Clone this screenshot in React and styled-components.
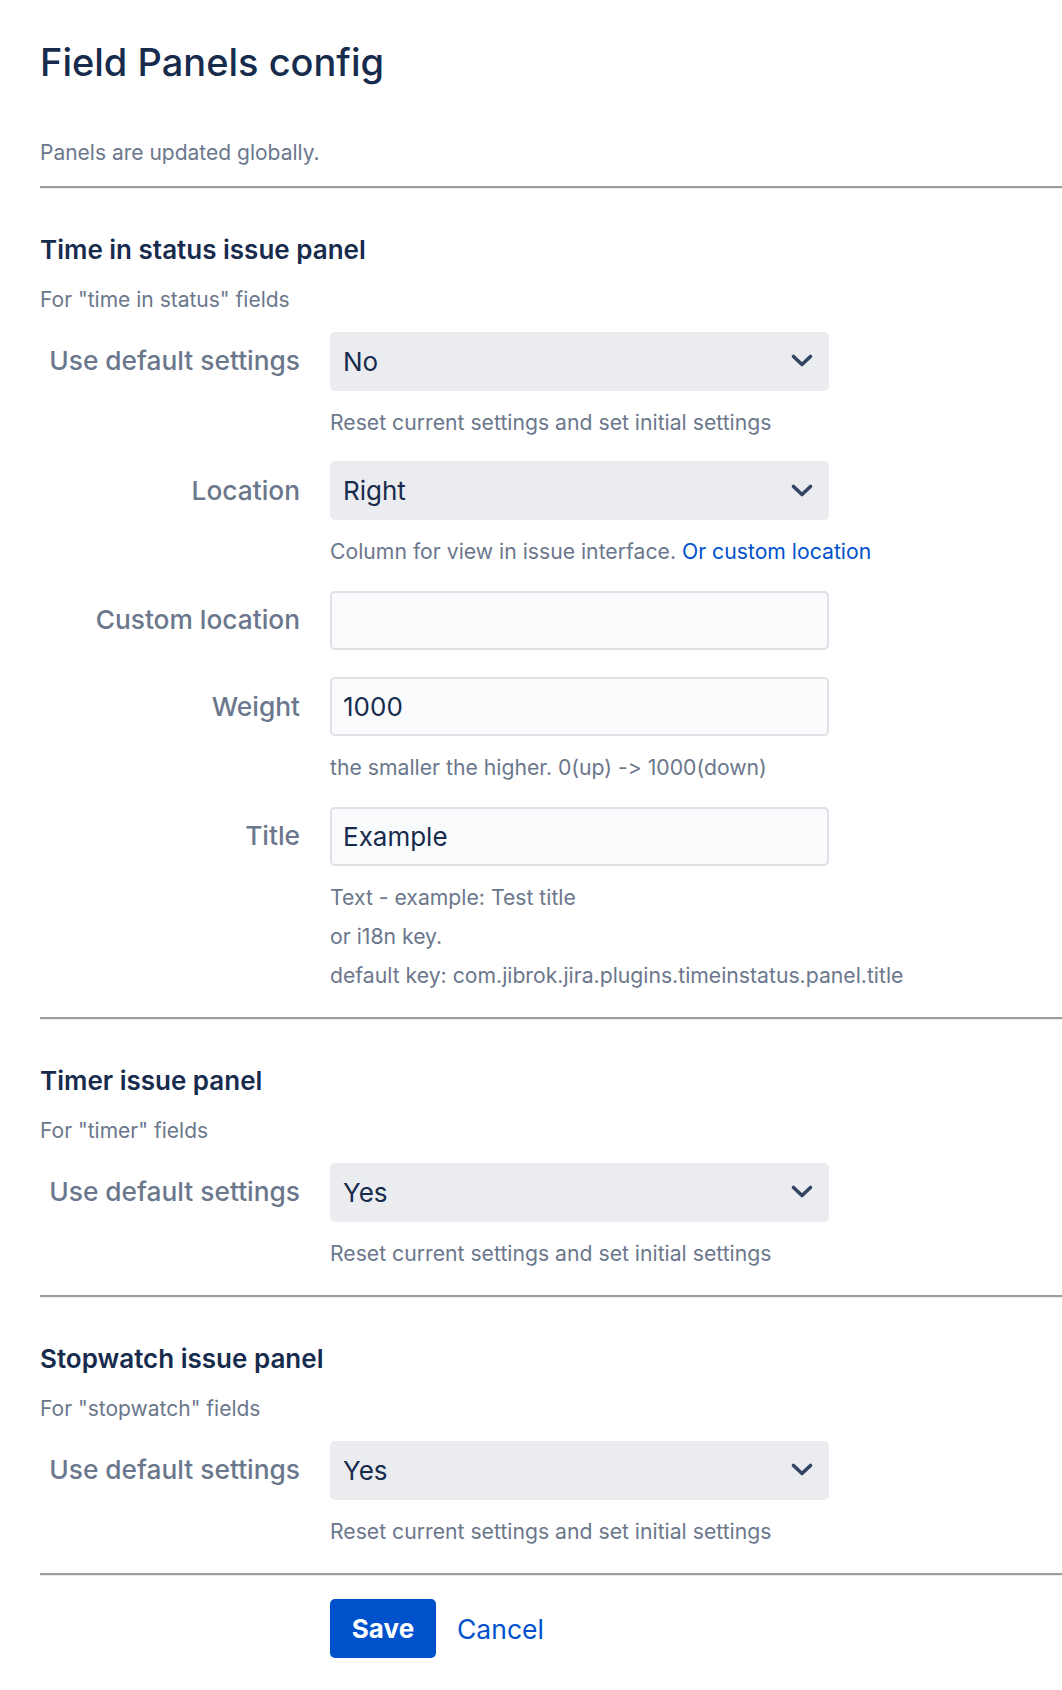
import React from 'react';
import styled, { createGlobalStyle } from 'styled-components';

const GlobalStyle = createGlobalStyle`
  body {
    margin: 0;
    background: #ffffff;
    font-family: Inter, "Noto Sans", "Liberation Sans", sans-serif;
    font-feature-settings: "calt" 0;
    font-variant-ligatures: none;
    color: #172b4d;
  }
`;

const Page = styled.div`
  padding: 40px 0 30px 40px;
`;

const Title = styled.h1`
  margin: 0;
  font-size: 38px;
  line-height: 44px;
  font-weight: 500;
  color: #172b4d;
`;

const Intro = styled.p`
  margin: 57px 0 21px;
  font-size: 21px;
  line-height: 24px;
  color: #6b778c;
`;

const Divider = styled.hr`
  margin: 0;
  height: 0;
  border: 0;
  border-top: 2px solid #9c9c9c;
  border-bottom: 1px solid #ececec;
`;

const Section = styled.section`
  padding: 45px 0 30.5px;
`;

const SectionTitle = styled.h2`
  margin: 0;
  font-size: 26px;
  line-height: 32px;
  font-weight: 600;
  color: #172b4d;
`;

const SectionNote = styled.p`
  margin: 22px 0 19.5px;
  font-size: 21px;
  line-height: 24px;
  color: #6b778c;
`;

const Fields = styled.div`
  display: flex;
  flex-direction: column;
  gap: 27.5px;
`;

const Row = styled.div`
  display: grid;
  grid-template-columns: 260px 1fr;
  column-gap: 30px;
  align-items: center;
`;

const Label = styled.label`
  text-align: right;
  font-size: 26.3px;
  line-height: 32px;
  font-weight: 500;
  color: #6b778c;
  white-space: nowrap;
`;

const Select = styled.div`
  box-sizing: border-box;
  width: 499px;
  height: 59px;
  display: flex;
  align-items: center;
  justify-content: space-between;
  padding: 0 15px 0 13px;
  background: #ebecf0;
  border-radius: 5px;
  font-size: 26px;
  color: #172b4d;
  cursor: pointer;
`;

const TextInput = styled.input`
  box-sizing: border-box;
  width: 499px;
  height: 59px;
  margin: 0;
  padding: 0 11px;
  border: 2px solid #dfe1e6;
  border-radius: 5px;
  background: #fafbfc;
  font-family: inherit;
  font-size: 26px;
  color: #172b4d;
  outline: none;
`;

const Help = styled.div`
  grid-column: 2;
  margin-top: 19px;
  font-size: 21.2px;
  line-height: 24px;
  color: #6b778c;
  white-space: nowrap;

  & + & {
    margin-top: 15px;
  }
`;

const Link = styled.a`
  color: #0052cc;
  text-decoration: none;
  cursor: pointer;
`;

const Actions = styled.div`
  display: flex;
  align-items: center;
  gap: 21px;
  margin-top: 23px;
  padding-left: 290px;
`;

const SaveButton = styled.button`
  box-sizing: border-box;
  width: 106px;
  height: 59px;
  border: 0;
  border-radius: 5px;
  background: #0052cc;
  color: #ffffff;
  font-family: inherit;
  font-size: 26px;
  font-weight: 700;
  cursor: pointer;
`;

const CancelLink = styled(Link)`
  font-size: 26.5px;
`;

const Chevron = () => (
  <svg width="24" height="16" viewBox="0 0 24 16" aria-hidden="true">
    <polyline
      points="3.5,3.5 12,11.5 20.5,3.5"
      fill="none"
      stroke="#344563"
      strokeWidth="3.6"
      strokeLinecap="round"
      strokeLinejoin="round"
    />
  </svg>
);

const SelectField = ({ label, value, help }) => (
  <Row>
    <Label>{label}</Label>
    <Select>
      <span>{value}</span>
      <Chevron />
    </Select>
    {help && <Help>{help}</Help>}
  </Row>
);

const InputField = ({ label, value, help = [] }) => (
  <Row>
    <Label>{label}</Label>
    <TextInput defaultValue={value} />
    {help.map((line, i) => (
      <Help key={i}>{line}</Help>
    ))}
  </Row>
);

const RESET_HELP = 'Reset current settings and set initial settings';

const App = () => {
  return (
    <>
      <GlobalStyle />
      <Page>
        <Title>Field Panels config</Title>
        <Intro>Panels are updated globally.</Intro>
        <Divider />

        <Section>
          <SectionTitle>Time in status issue panel</SectionTitle>
          <SectionNote>For "time in status" fields</SectionNote>
          <Fields>
            <SelectField label="Use default settings" value="No" help={RESET_HELP} />
            <SelectField
              label="Location"
              value="Right"
              help={
                <>
                  Column for view in issue interface. <Link>Or custom location</Link>
                </>
              }
            />
            <InputField label="Custom location" value="" />
            <InputField
              label="Weight"
              value="1000"
              help={['the smaller the higher. 0(up) -> 1000(down)']}
            />
            <InputField
              label="Title"
              value="Example"
              help={[
                'Text - example: Test title',
                'or i18n key.',
                'default key: com.jibrok.jira.plugins.timeinstatus.panel.title',
              ]}
            />
          </Fields>
        </Section>
        <Divider />

        <Section>
          <SectionTitle>Timer issue panel</SectionTitle>
          <SectionNote>For "timer" fields</SectionNote>
          <Fields>
            <SelectField label="Use default settings" value="Yes" help={RESET_HELP} />
          </Fields>
        </Section>
        <Divider />

        <Section>
          <SectionTitle>Stopwatch issue panel</SectionTitle>
          <SectionNote>For "stopwatch" fields</SectionNote>
          <Fields>
            <SelectField label="Use default settings" value="Yes" help={RESET_HELP} />
          </Fields>
        </Section>
        <Divider />

        <Actions>
          <SaveButton>Save</SaveButton>
          <CancelLink>Cancel</CancelLink>
        </Actions>
      </Page>
    </>
  );
};

export default App;
